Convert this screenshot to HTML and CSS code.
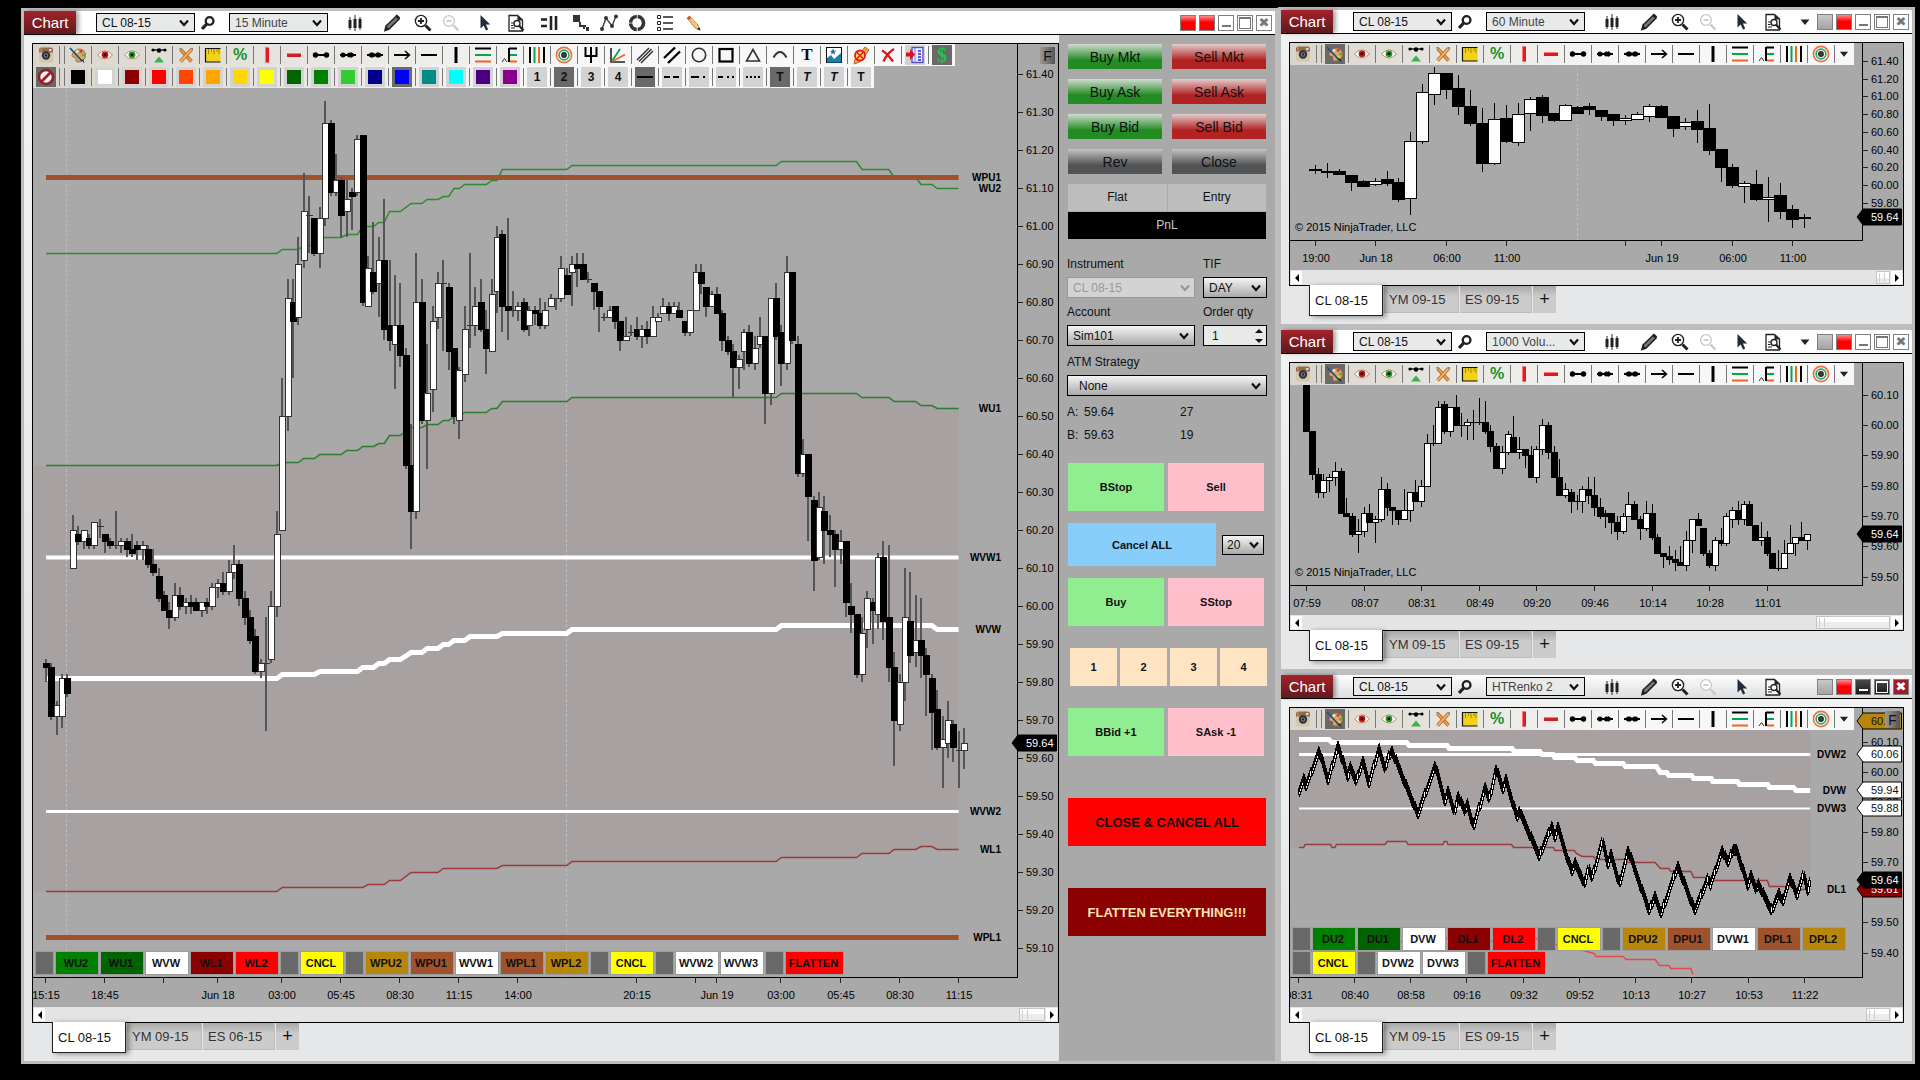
FILE: index.html
```html
<!DOCTYPE html>
<html lang="en">
<head>
<meta charset="utf-8">
<title>Chart Trader - CL 08-15</title>
<meta name="viewport" content="width=device-width, initial-scale=1">
<link rel="stylesheet" href="styles.css">
</head>
<body>
<svg class="sprite" aria-hidden="true">
  <symbol id="search" viewBox="0 0 20 20"><circle cx="12" cy="7.5" r="4.800" fill="none" stroke="#222" stroke-width="3"/><path d="M8.5 11L2.500 17.500" stroke="#222" stroke-width="4"/></symbol>
  <symbol id="candles" viewBox="0 0 20 20"><path d="M5 4v13M10 2v16M15 4v13" stroke="#222" stroke-width="1"/><path d="M5 7v8M10 6v9M15 6v9" stroke="#222" stroke-width="3"/></symbol>
  <symbol id="pen" viewBox="0 0 20 20"><path d="M4 13L14 3.4 17 6 7 16 3 17.5z" fill="#777" stroke="#222" stroke-width="1.5"/><path d="M3 17.5l1-4.5 3 3zM13 3l2-1.4 3.2 3L17 6.4z" fill="#222"/></symbol>
  <symbol id="zoomin" viewBox="0 0 20 20"><circle cx="8" cy="8" r="5.6" fill="#fff" stroke="#222" stroke-width="1.4"/><path d="M8 5v6M5 8h6" stroke="#222" stroke-width="1.8"/><path d="M12.5 12.5l5 5" stroke="#222" stroke-width="3"/></symbol>
  <symbol id="zoomout" viewBox="0 0 20 20"><circle cx="8" cy="8" r="5.4" fill="#fff" stroke="#c8c8c8" stroke-width="1.3"/><path d="M5.5 8h5" stroke="#bbb" stroke-width="1.4"/><path d="M12.5 12.5l5 5" stroke="#c8c8c8" stroke-width="2.4"/></symbol>
  <symbol id="cursor" viewBox="0 0 20 20"><path d="M5.500 2v13.500l3.200-3 2.300 5 2.200-1-2.300-5h4.300z" fill="#222b3a"/></symbol>
  <symbol id="docfind" viewBox="0 0 20 20"><path d="M3 2.500h8.500l5 4.500v11H3z" fill="#fff" stroke="#222" stroke-width="1.300"/><path d="M11.500 2.500v5h5" fill="#222"/><path d="M5 10h3M5 12.500h2.500M5 15h4" stroke="#222"/><circle cx="11" cy="10.500" r="3" fill="#fff" stroke="#222" stroke-width="1.300"/><path d="M13 12.500l4.500 5" stroke="#222" stroke-width="2.200"/></symbol>
  <symbol id="trader" viewBox="0 0 20 20"><path d="M1 6.500h6M1 13h6" stroke="#222" stroke-width="2.600"/><path d="M11 3v14M16 3v14" stroke="#222" stroke-width="2.600"/></symbol>
  <symbol id="blocks" viewBox="0 0 20 20"><path d="M2 2h7v7H2zM8 9h2v3h2v2H8zM12 12h3v2h-3zM12 14h2v2h-2zM15 14h3v4h-3z" fill="#333"/></symbol>
  <symbol id="poly" viewBox="0 0 20 20"><path d="M3 16L7 5l6 8 4-10" fill="none" stroke="#333" stroke-width="1.300"/><g fill="#333"><circle cx="3" cy="16" r="2"/><circle cx="7" cy="5" r="2"/><circle cx="13" cy="13" r="2"/><circle cx="17" cy="3.500" r="2"/></g></symbol>
  <symbol id="ring" viewBox="0 0 20 20"><circle cx="10" cy="10" r="6.500" fill="none" stroke="#333" stroke-width="3.600" stroke-dasharray="9.200 1"/></symbol>
  <symbol id="list" viewBox="0 0 20 20"><path d="M2.500 2.500h3v3h-3zM2.500 8.500h3v3h-3zM2.500 14.500h3v3h-3z" fill="none" stroke="#222"/><path d="M8 4h10M8 10h10M8 16h10" stroke="#222" stroke-width="1.600"/></symbol>
  <symbol id="pencil" viewBox="0 0 20 20"><path d="M4 5l2.500-2L15 12l2 5-5-2z" fill="#f8c374" stroke="#b8772c" stroke-width=".8"/><path d="M4 5l2.500-2 1.800 2-2.500 2z" fill="#d84a3c"/><path d="M17.500 17.500l-3.500-1.200 2.500-2z" fill="#222"/></symbol>
  <symbol id="caret" viewBox="0 0 20 20"><path d="M5.500 7.500h9L10 13z" fill="#222"/></symbol>

  <symbol id="camera" viewBox="0 0 20 20"><rect x="3" y="2.500" width="14" height="15" rx="2.500" fill="#d6c6ac"/><path d="M3 7.500V5q0-2.500 2.500-2.500h9Q17 2.500 17 5v2.500z" fill="#96694a"/><path d="M5 3v4" stroke="#c94"/><circle cx="10" cy="10.500" r="4.200" fill="#2e3236"/><circle cx="10" cy="10.500" r="2.200" fill="#6f7c88"/><circle cx="10" cy="10.500" r="1" fill="#111"/><rect x="13" y="4" width="2.500" height="2" fill="#cfe0e6"/></symbol>
  <symbol id="palette" viewBox="0 0 20 20"><path d="M5 8Q9 2 15 5q4 3 2 8-3 5-8 4-2-1-1-3 0-2-3-2-2-1 0-4z" fill="#d9a869" stroke="#8a6236" stroke-width=".8"/><circle cx="13" cy="6.500" r="1.400" fill="#d33"/><circle cx="15.500" cy="10" r="1.400" fill="#3b3"/><circle cx="13.500" cy="13.500" r="1.500" fill="#eec92c"/><circle cx="9" cy="6.500" r="1.200" fill="#eee"/><path d="M2 3l12 13" stroke="#1d4f8f" stroke-width="1.800"/><path d="M12.500 14l4 4.500-1-3.500z" fill="#222"/></symbol>
  <symbol id="eyered" viewBox="0 0 20 20"><path d="M2.500 10Q10 1.500 17.500 10 10 18 2.500 10z" fill="#fff" stroke="#b98f63" stroke-width="1"/><circle cx="10" cy="9.800" r="3.400" fill="#c3141c"/><circle cx="10" cy="9.800" r="1.500" fill="#111"/></symbol>
  <symbol id="eyegreen" viewBox="0 0 20 20"><path d="M2.500 10Q10 1.500 17.500 10 10 18 2.500 10z" fill="#fff" stroke="#b98f63" stroke-width="1"/><circle cx="10" cy="9.800" r="3.400" fill="#1f9c28"/><circle cx="10" cy="9.800" r="1.500" fill="#111"/></symbol>
  <symbol id="nodesup" viewBox="0 0 20 20"><path d="M3 5h14" stroke="#000" stroke-width="1.300"/><circle cx="4" cy="5" r="1.600"/><circle cx="10" cy="5.500" r="2.200"/><circle cx="16" cy="5" r="1.600"/><path d="M10 11.500l5 6H5z" fill="#35b54a"/></symbol>
  <symbol id="tools" viewBox="0 0 20 20"><path d="M4.500 4.500l11 12" stroke="#b0601f" stroke-width="3.400"/><path d="M4.500 4.500l11 12" stroke="#f29a3c" stroke-width="2"/><path d="M15.500 4.500l-11 12" stroke="#a9662a" stroke-width="3.400"/><path d="M15.500 4.500l-11 12" stroke="#f4b163" stroke-width="2"/><path d="M3 3l3 0-1.500 3zM14 3l3 0 0 3z" fill="#888"/></symbol>
  <symbol id="ruler" viewBox="0 0 20 20"><rect x="2.500" y="3.500" width="15" height="13.500" fill="#f2d21b"/><path d="M17.500 3.500h-15V17h15" fill="none" stroke="#111" stroke-width="1.200"/><path d="M5.500 4v5M8.500 4v3M11 4v5M14 4v3M16 4v5" stroke="#a38700" stroke-width="1"/></symbol>
  <symbol id="barv" viewBox="0 0 20 20"><rect x="8" y="2.500" width="4" height="15" fill="#e01b22"/><path d="M8.500 3v14" stroke="#f77"/></symbol>
  <symbol id="barh" viewBox="0 0 20 20"><rect x="3" y="8" width="14" height="4" fill="#cf2027"/><path d="M3 8.500h14" stroke="#f77"/></symbol>
  <symbol id="seg" viewBox="0 0 20 20"><path d="M3 10h14" stroke="#000" stroke-width="2"/><circle cx="4.500" cy="10" r="2.700"/><circle cx="15.500" cy="10" r="2.700"/></symbol>
  <symbol id="ray" viewBox="0 0 20 20"><path d="M2 10h16" stroke="#000" stroke-width="2"/><circle cx="5" cy="10" r="2.500"/><circle cx="11.500" cy="10" r="2.500"/><path d="M13 7l4.500 3-4.500 3z"/></symbol>
  <symbol id="ext" viewBox="0 0 20 20"><path d="M2 10h16" stroke="#000" stroke-width="2"/><circle cx="7.500" cy="10" r="2.500"/><circle cx="12.500" cy="10" r="2.500"/><path d="M6.500 7L2 10l4.500 3zM13.500 7l4.500 3-4.500 3z"/></symbol>
  <symbol id="arrow" viewBox="0 0 20 20"><path d="M2 10h15" stroke="#000" stroke-width="2"/><path d="M13 6l4.500 4-4.500 4" fill="none" stroke="#000" stroke-width="1.500"/></symbol>
  <symbol id="hline" viewBox="0 0 20 20"><path d="M2 10h16" stroke="#000" stroke-width="2"/></symbol>
  <symbol id="vline" viewBox="0 0 20 20"><path d="M10 2v16" stroke="#000" stroke-width="3"/></symbol>
  <symbol id="retr" viewBox="0 0 20 20"><path d="M2 3.500h16" stroke="#000" stroke-width="2"/><path d="M2 10h16" stroke="#00a651" stroke-width="2"/><path d="M2 16.500h16" stroke="#f26522" stroke-width="2"/></symbol>
  <symbol id="fibext" viewBox="0 0 20 20"><path d="M9 3v14M9 3.500h8" stroke="#000" stroke-width="2" fill="none"/><path d="M10 10h7" stroke="#00a651" stroke-width="2"/><path d="M10 16.500h7" stroke="#f26522" stroke-width="2"/><path d="M2 17l2.500-3.500L7 17" fill="none" stroke="#333" stroke-width="1"/></symbol>
  <symbol id="fibtime" viewBox="0 0 20 20"><path d="M3 2v16M17 2v16" stroke="#000" stroke-width="2"/><path d="M7.500 2v16" stroke="#00a651" stroke-width="2"/><path d="M12 2v16" stroke="#f26522" stroke-width="2"/></symbol>
  <symbol id="target" viewBox="0 0 20 20"><g fill="none" stroke-width="1.600"><circle cx="10" cy="10" r="7.600" stroke="#f0703a"/><circle cx="10" cy="10" r="4.900" stroke="#2aa866"/><circle cx="10" cy="10" r="2.100" stroke="#222"/></g><circle cx="10" cy="10" r="1"/></symbol>
  <symbol id="fork" viewBox="0 0 20 20"><path d="M4.500 2v9h11V2M10 2v16" fill="none" stroke="#000" stroke-width="2"/></symbol>
  <symbol id="fan" viewBox="0 0 20 20"><path d="M3 3v14h14" fill="none" stroke="#222" stroke-width="1.600"/><path d="M4 16L12 4" stroke="#00a651" stroke-width="1.800"/><path d="M4 16.500L17 9.500" stroke="#f26522" stroke-width="1.800"/></symbol>
  <symbol id="hatch" viewBox="0 0 20 20"><path d="M2 15L14 3M4 16.500L16.500 4M6 18L18 6" stroke="#333" stroke-width="1.500"/></symbol>
  <symbol id="para" viewBox="0 0 20 20"><path d="M2 13L13 2.500M6 18L18 6.500" stroke="#000" stroke-width="2.400"/></symbol>
  <symbol id="circle" viewBox="0 0 20 20"><circle cx="10" cy="10" r="6.700" fill="none" stroke="#333" stroke-width="1.600"/></symbol>
  <symbol id="square" viewBox="0 0 20 20"><rect x="3.500" y="4" width="13" height="12.500" fill="none" stroke="#000" stroke-width="2.200"/></symbol>
  <symbol id="tri" viewBox="0 0 20 20"><path d="M10 4.500l6.500 11.500h-13z" fill="none" stroke="#333" stroke-width="1.600"/></symbol>
  <symbol id="arc" viewBox="0 0 20 20"><path d="M3.500 12.500Q10 1.500 16.500 12.500" fill="none" stroke="#333" stroke-width="2"/></symbol>
  <symbol id="pic" viewBox="0 0 20 20"><rect x="2.500" y="2.500" width="15" height="15" fill="#fff" stroke="#111"/><path d="M3 13l4-3 3 4 7-6v9.500H3z" fill="#1a7fb0"/><path d="M9 3.500l1 2.200 2.300.1-1.800 1.400.7 2.200L9 8.200 6.900 9.400l.7-2.200-1.800-1.400 2.200-.1z" fill="#156fa0"/></symbol>
  <symbol id="nopen" viewBox="0 0 20 20"><path d="M14 2l4 3-9 12-6 2 1-5z" fill="#f0a13a" stroke="#a95a1a" stroke-width=".8"/><circle cx="9" cy="10.500" r="5" fill="#ffd84a" stroke="#e01b22" stroke-width="1.800"/><path d="M5.500 7l7 7M12.500 7l-7 7" stroke="#e01b22" stroke-width="1.500"/></symbol>
  <symbol id="del" viewBox="0 0 20 20"><path d="M4 5.500Q9 8 15 16.500M16 4Q9 8 5.500 16.500" fill="none" stroke="#d8141b" stroke-width="2.200"/></symbol>
  <symbol id="import" viewBox="0 0 20 20"><rect x="7" y="2.500" width="11" height="15" fill="#e8e8ff" stroke="#4b4bd0" stroke-width="1.300"/><path d="M13 6h3M13 9h3M13 12h3M13 15h3" stroke="#2b2bd0" stroke-width="1.400"/><path d="M10 3v14" stroke="#7d7de8"/><path d="M1 7.500h4V4l5 5.500-5 5.500v-3.500H1z" fill="#d8141b"/></symbol>
  <symbol id="nocolor" viewBox="0 0 20 20"><circle cx="10" cy="10" r="7" fill="#f4f4f4" stroke="#9b1c1f" stroke-width="2.600"/><path d="M15 5L5 15" stroke="#9b1c1f" stroke-width="2.600"/></symbol>
  <symbol id="s-solid" viewBox="0 0 20 20"><path d="M2 10h16" stroke="#000" stroke-width="2"/></symbol>
  <symbol id="s-dash" viewBox="0 0 20 20"><path d="M2 10h16" stroke="#000" stroke-width="2" stroke-dasharray="6 3"/></symbol>
  <symbol id="s-dashdot" viewBox="0 0 20 20"><path d="M2 10h16" stroke="#000" stroke-width="2" stroke-dasharray="8 4 2 4"/></symbol>
  <symbol id="s-dashdd" viewBox="0 0 20 20"><path d="M2 10h16" stroke="#000" stroke-width="2" stroke-dasharray="5 4 2 3 2 3"/></symbol>
  <symbol id="s-dot" viewBox="0 0 20 20"><path d="M3 10h15" stroke="#000" stroke-width="2" stroke-dasharray="2 2"/></symbol>
</svg>

<main class="desk">
  <section class="win win-main" aria-label="CL 08-15, 15 Minute">
    <header class="bar">
      <h1 class="tag">Chart</h1>
      <select class="pick" aria-label="Instrument"><option>CL 08-15</option></select>
      <button class="find" aria-label="Find instrument"><svg><use href="#search"/></svg></button>
      <select class="pick soft" aria-label="Interval"><option>15 Minute</option></select>
      <div class="tools" data-full="yes"></div>
      <div class="ctl"><i class="link red"></i><i class="link red"></i><button class="min" aria-label="Minimize"></button><button class="max" aria-label="Maximize"></button><button class="cls" aria-label="Close">✖</button></div>
    </header>
    <div class="body">
      <div class="charting">
        <div class="frame">
          <div class="plot" data-chart="min15">
            <svg class="canvas"></svg>
            <div class="draw"><div class="drawrow" data-row="full"></div><div class="drawrow" data-row="style"></div></div>
            <button class="fixed">F</button>
            <div class="chips" data-chips="-,WU2:green,WU1:forest,WVW:white,WL1:maroon,WL2:red,-,CNCL:yellow,-,WPU2:gold,WPU1:sienna,WVW1:white,WPL1:sienna,WPL2:gold,-,CNCL:yellow,-,WVW2:white,WVW3:white,-,FLATTEN:red"></div>
          </div>
          <div class="scroll"><button aria-label="Scroll left" class="sl"></button><div class="track"><span class="thumb"></span></div><button aria-label="Scroll right" class="sr"></button></div>
        </div>
        <nav class="tabs"><button class="on">CL 08-15</button><button>YM 09-15</button><button>ES 06-15</button><button class="add">+</button></nav>
      </div>
      <form class="panel">
        <div class="orders">
          <button type="button" class="buy">Buy Mkt</button><button type="button" class="sell">Sell Mkt</button>
          <button type="button" class="buy">Buy Ask</button><button type="button" class="sell">Sell Ask</button>
          <button type="button" class="buy">Buy Bid</button><button type="button" class="sell">Sell Bid</button>
          <button type="button" class="flat">Rev</button><button type="button" class="flat">Close</button>
        </div>
        <div class="status"><span>Flat</span><span>Entry</span><span class="pnl">PnL</span></div>
        <div class="fields">
          <div class="field"><label for="ins">Instrument</label><select id="ins" disabled><option>CL 08-15</option></select></div>
          <div class="field"><label for="tif">TIF</label><select id="tif"><option>DAY</option></select></div>
          <div class="field"><label for="acc">Account</label><select id="acc"><option>Sim101</option></select></div>
          <div class="field"><label for="qty">Order qty</label><input id="qty" type="number" value="1"></div>
        </div>
        <div class="field atm"><label for="atm">ATM Strategy</label><select id="atm"><option>None</option></select></div>
        <div class="quote"><span>A:</span><span>59.64</span><span>27</span><span>B:</span><span>59.63</span><span>19</span></div>
        <div class="pair first"><button type="button" class="lime">BStop</button><button type="button" class="pink">Sell</button></div>
        <div class="cancel"><button type="button" class="sky">Cancel ALL</button><select aria-label="Offset"><option>20</option></select></div>
        <div class="pair"><button type="button" class="lime">Buy</button><button type="button" class="pink">SStop</button></div>
        <div class="quad"><button type="button">1</button><button type="button">2</button><button type="button">3</button><button type="button">4</button></div>
        <div class="pair"><button type="button" class="lime">BBid +1</button><button type="button" class="pink">SAsk -1</button></div>
        <button type="button" class="big closeall">CLOSE &amp; CANCEL ALL</button>
        <button type="button" class="big flatten">FLATTEN EVERYTHING!!!</button>
      </form>
    </div>
  </section>

  <div class="side">
    <section class="win" aria-label="CL 08-15, 60 Minute">
      <header class="bar">
        <h2 class="tag">Chart</h2>
        <select class="pick" aria-label="Instrument"><option>CL 08-15</option></select>
        <button class="find" aria-label="Find instrument"><svg><use href="#search"/></svg></button>
        <select class="pick soft" aria-label="Interval"><option>60 Minute</option></select>
        <div class="tools"></div>
        <button class="more" aria-label="More"><svg><use href="#caret"/></svg></button>
        <div class="ctl"><i class="link"></i><i class="link red"></i><button class="min" aria-label="Minimize"></button><button class="max" aria-label="Maximize"></button><button class="cls" aria-label="Close">✖</button></div>
      </header>
      <div class="body"><div class="charting">
        <div class="frame">
          <div class="plot" data-chart="min60"><svg class="canvas"></svg><div class="draw"><div class="drawrow" data-row="short"></div></div></div>
          <div class="scroll"><button aria-label="Scroll left" class="sl"></button><div class="track"><span class="thumb t1"></span></div><button aria-label="Scroll right" class="sr"></button></div>
        </div>
        <nav class="tabs"><button class="on">CL 08-15</button><button>YM 09-15</button><button>ES 09-15</button><button class="add">+</button></nav>
      </div></div>
    </section>

    <section class="win" aria-label="CL 08-15, 1000 Volume">
      <header class="bar">
        <h2 class="tag">Chart</h2>
        <select class="pick" aria-label="Instrument"><option>CL 08-15</option></select>
        <button class="find" aria-label="Find instrument"><svg><use href="#search"/></svg></button>
        <select class="pick soft" aria-label="Interval"><option>1000 Volu...</option></select>
        <div class="tools"></div>
        <button class="more" aria-label="More"><svg><use href="#caret"/></svg></button>
        <div class="ctl"><i class="link"></i><i class="link red"></i><button class="min" aria-label="Minimize"></button><button class="max" aria-label="Maximize"></button><button class="cls" aria-label="Close">✖</button></div>
      </header>
      <div class="body"><div class="charting">
        <div class="frame">
          <div class="plot" data-chart="vol"><svg class="canvas"></svg><div class="draw"><div class="drawrow" data-row="short"></div></div></div>
          <div class="scroll"><button aria-label="Scroll left" class="sl"></button><div class="track"><span class="thumb t2"></span></div><button aria-label="Scroll right" class="sr"></button></div>
        </div>
        <nav class="tabs"><button class="on">CL 08-15</button><button>YM 09-15</button><button>ES 09-15</button><button class="add">+</button></nav>
      </div></div>
    </section>

    <section class="win active" aria-label="CL 08-15, HTRenko 2">
      <header class="bar">
        <h2 class="tag">Chart</h2>
        <select class="pick" aria-label="Instrument"><option>CL 08-15</option></select>
        <button class="find" aria-label="Find instrument"><svg><use href="#search"/></svg></button>
        <select class="pick soft" aria-label="Interval"><option>HTRenko 2</option></select>
        <div class="tools"></div>
        <div class="ctl"><i class="link"></i><i class="link red"></i><button class="min" aria-label="Minimize"></button><button class="max" aria-label="Maximize"></button><button class="cls" aria-label="Close">✖</button></div>
      </header>
      <div class="body"><div class="charting">
        <div class="frame">
          <div class="plot" data-chart="renko"><svg class="canvas"></svg><div class="draw"><div class="drawrow" data-row="short"></div></div>
            <button class="fixed">F</button>
            <div class="chips" data-chips="-,DU2:green,DU1:forest,DVW:white,DL1:maroon,DL2:red,-,CNCL:yellow,-,DPU2:gold,DPU1:sienna,DVW1:white,DPL1:sienna,DPL2:gold,-,CNCL:yellow,-,DVW2:white,DVW3:white,-,FLATTEN:red"></div>
          </div>
          <div class="scroll"><button aria-label="Scroll left" class="sl"></button><div class="track"><span class="thumb t3"></span></div><button aria-label="Scroll right" class="sr"></button></div>
        </div>
        <nav class="tabs"><button class="on">CL 08-15</button><button>YM 09-15</button><button>ES 09-15</button><button class="add">+</button></nav>
      </div></div>
    </section>
  </div>
</main>
<script src="app.js"></script>
</body>
</html>
```
FILE: styles.css
```css
* { box-sizing: border-box; }
html, body { height: 100%; }
body {
  margin: 0;
  background: #000;
  color: #111;
  font: 12px "Liberation Sans", Arial, sans-serif;
}
button, select, input { font: inherit; color: inherit; margin: 0; padding: 0; border-radius: 0; }
button { border: 0; background: none; cursor: pointer; }
h1, h2 { margin: 0; font-weight: normal; }
.sprite { position: absolute; width: 0; height: 0; }

.desk {
  display: grid;
  grid-template-columns: minmax(0, 1257fr) minmax(0, 637fr);
  height: 100vh;
  min-height: 960px;
  padding: 7px 5px 16px 21px;
}
.side { display: grid; grid-template-rows: minmax(0, 320fr) minmax(0, 345fr) minmax(0, 392fr); }

/* windows */
.win {
  display: flex;
  flex-direction: column;
  border: 3px solid #bdbdbd;
  background: linear-gradient(#f2f4f4, #e6e7e9 60%);
  min-width: 0;
  min-height: 0;
}
.win-main { margin-top: 1px; }
.bar {
  display: flex;
  align-items: center;
  height: 24px;
  flex: none;
  background: #fff;
  border-bottom: 1px solid #000;
}
.active .bar { background: linear-gradient(#fdfdfd, #dcdee0); }
.tag {
  width: 52px;
  height: 23px;
  margin-right: 20px;
  flex: none;
  background: linear-gradient(#a52229, #5e1a1e);
  box-shadow: 3px 0 4px rgba(0, 0, 0, .35);
  color: #fff;
  font-size: 15px;
  line-height: 23px;
  text-align: center;
}
select, .field input {
  appearance: none;
  border: 1px solid #000;
  background: url("data:image/svg+xml,%3Csvg xmlns='http://www.w3.org/2000/svg' width='10' height='8'%3E%3Cpath d='M1 1.500l4 4.500 4-4.500' fill='none' stroke='%23111' stroke-width='2.200'/%3E%3C/svg%3E") no-repeat right 5px center, linear-gradient(#f4f4f4, #a9a9a9);
  padding: 0 5px;
}
.pick { width: 99px; height: 19px; flex: none; background-color: #e8eaea; background-image: url("data:image/svg+xml,%3Csvg xmlns='http://www.w3.org/2000/svg' width='10' height='8'%3E%3Cpath d='M1 1.500l4 4.500 4-4.500' fill='none' stroke='%23111' stroke-width='2.200'/%3E%3C/svg%3E"); }
.pick.soft { color: #444; }
.find { width: 16px; height: 16px; margin: 0 13px 0 5px; flex: none; }
.find svg, .tools svg, .more svg { display: block; width: 100%; height: 100%; }
.tools { display: flex; gap: 8px; margin-left: 17px; flex: 1; min-width: 0; overflow: hidden; }
.tools button { width: 20px; height: 20px; flex: none; }
.tools .sp3 { margin-left: 3px; }
.tools .sp6 { margin-left: 6px; }
.tools .sp9 { margin-left: 9px; }
.more { width: 20px; height: 20px; margin-right: 2px; flex: none; }
.ctl { display: flex; gap: 3px; padding-right: 3px; flex: none; }
.ctl > * { width: 16px; height: 16px; border: 1px solid #808080; background: #fff; }
.ctl .link { background: linear-gradient(#c9c7c8, #a5a3a4); }
.ctl .red { background: linear-gradient(#ff8c8c, #f00 45%); }
.ctl button { display: flex; align-items: center; justify-content: center; }
.ctl .min { align-items: flex-end; }
.ctl .min::before { content: ""; width: 9px; height: 2px; margin-bottom: 3px; background: #777; }
.ctl .max::before { content: ""; width: 10px; height: 9px; border: 1px solid #777; border-top-width: 2px; }
.ctl .cls { color: #777; font: 13px "DejaVu Sans", sans-serif; line-height: 14px; }
.active .ctl button { background: linear-gradient(#4a4a4e, #1a1a1d); }
.active .ctl .min::before { background: #fff; }
.active .ctl .max::before { border-color: #fff; }
.active .ctl .cls { color: #fff; background: #a01c26; }

.body { display: flex; flex: 1; min-height: 0; }
.charting { display: flex; flex-direction: column; flex: 1; min-width: 0; padding: 8px 8px 0; }
.win-main .charting { padding-right: 0; }
.frame { display: flex; flex-direction: column; flex: 1; min-height: 0; border: 1px solid #000; }
.plot {
  display: grid;
  grid-template: minmax(0, 1fr) / minmax(0, 1fr);
  flex: 1;
  min-height: 0;
  background: #a9a9a9;
  overflow: hidden;
}
.plot > * { grid-area: 1 / 1; }
.canvas { width: 100%; height: 100%; font-size: 11px; }
.canvas .tagline { font-size: 10px; font-weight: bold; text-anchor: end; }

/* drawing toolbars */
.draw { align-self: start; justify-self: start; max-width: 100%; overflow: hidden; }
.drawrow {
  display: flex;
  align-items: center;
  width: max-content;
  height: 22px;
  padding-left: 3px;
  background: linear-gradient(90deg, #d9d5cc, #f7f7f7 60%);
}
.drawrow button {
  display: flex;
  align-items: center;
  justify-content: center;
  width: 20px;
  height: 20px;
  flex: none;
  margin: 0 3px;
  font-weight: bold;
  font-size: 12px;
}
.drawrow button:first-child { margin: 0 3px 0 0; }
.drawrow svg { width: 20px; height: 20px; }
.drawrow .sep { width: 1px; height: 18px; background: #777; flex: none; }
.drawrow .grip { width: 6px; height: 18px; border: solid #777; border-width: 0 1px; flex: none; }
.drawrow .box { background: #d3d3d3; }
.drawrow button.sel { background: #696969; }
.drawrow .sw { width: 14px; height: 14px; }
.drawrow .pct { color: #17902b; font: bold 16px "Liberation Sans", sans-serif; }
.drawrow .dollar { color: #22c440; font: bold 20px "Liberation Serif", serif; }
.drawrow .serif { font: bold 17px "Liberation Serif", serif; }
.drawrow .ital { font-style: italic; }
.drawrow .drop { width: 18px; margin: 0 1px 0 0; }

.fixed {
  align-self: start;
  justify-self: end;
  width: 15px;
  height: 17px;
  margin: 3px 3px 0 0;
  background: linear-gradient(90deg, #999, #555);
  font-size: 14px;
}
.chips {
  display: flex;
  flex-wrap: wrap;
  gap: 2px 3px;
  align-self: end;
  margin: 0 40px 33px 0;
  padding: 0 3px;
}
.chips button, .chips i { height: 22px; outline: 1px solid #9c9c9c; }
.chips i { width: 17px; background: #696969; }
.chips button { width: 42px; padding-right: 2px; font-size: 11px; font-weight: bold; }
.chips .wide { width: 57px; }
.green { background: #008000; }
.forest { background: #006400; }
.white { background: #fff; }
.maroon { background: #8b0000; }
.red { background: #f00; }
.yellow { background: #ff0; }
.gold { background: #b8860b; }
.sienna { background: #a0522d; }

.scroll { display: flex; height: 15px; flex: none; background: #e4e4e4; padding: 1px; }
.scroll button { width: 11px; background: #fff; display: flex; align-items: center; justify-content: center; }
.scroll button::before { content: ""; border: 4px solid transparent; }
.scroll .sl::before { border-right-color: #000; margin-left: -4px; }
.scroll .sr::before { border-left-color: #000; margin-right: -4px; }
.track { display: flex; justify-content: flex-end; flex: 1; }
.thumb { width: 26px; margin-right: 1px; border: 1px solid #c4c4c4; background: linear-gradient(#fff 50%, #ececec 50%); }
.thumb::before { content: ""; display: block; width: 4px; height: 9px; margin: 1px 2px; border: solid #ccc; border-width: 0 1px; }
.thumb.t1 { width: 14px; }
.thumb.t2 { width: 74px; }
.thumb.t3 { width: 24px; }

.tabs { display: flex; gap: 1px; height: 38px; flex: none; padding-left: 20px; align-items: flex-start; }
.tabs button {
  width: 75px;
  height: 27px;
  padding-left: 5px;
  background: linear-gradient(#a9a9a9, #cbcbcb 40%);
  border: solid #bbb;
  border-width: 0 1px 1px 0;
  color: #333;
  font-size: 13px;
  text-align: left;
}
.tabs button:nth-child(3) { width: 72px; }
.tabs .on {
  width: 74px;
  height: 31px;
  margin-top: -1px;
  background: #fff;
  border: solid #222;
  border-width: 0 1px 1px;
  box-shadow: 3px 1px 5px rgba(0, 0, 0, .4);
  color: #111;
  z-index: 1;
}
.tabs .add { width: 23px; padding: 0; font-size: 18px; color: #111; border: 0; text-align: center; }

/* order panel */
.panel { width: 216px; flex: none; padding: 9px 8px; background: #a9a9a9; }
.orders { display: grid; grid-template-columns: 1fr 1fr; gap: 10px; padding: 0 1px; }
.orders button { height: 25px; font-size: 14px; color: #111; }
.orders .buy { background: linear-gradient(#d0dcd0, #228b22 65%); }
.orders .sell { background: linear-gradient(#e2cccc, #b22222 65%); }
.orders .flat { background: linear-gradient(#c4c4c4, #515355 65%); }
.status { display: grid; grid-template-columns: 1fr 1fr; gap: 1px; margin: 10px 1px 0; text-align: center; line-height: 27px; }
.status span { background: #bebebe; }
.status .pnl { grid-column: 1 / 3; background: #000; color: #ccc; }
.fields { display: grid; grid-template-columns: 1fr 64px; gap: 7px 8px; margin-top: 18px; }
.field { display: flex; flex-direction: column; gap: 6px; line-height: 14px; }
.field select, .field input { width: 100%; height: 21px; opacity: 1; }
.field select:disabled { color: #999; border-color: #999; background: url("data:image/svg+xml,%3Csvg xmlns='http://www.w3.org/2000/svg' width='10' height='8'%3E%3Cpath d='M1 1.500l4 4.500 4-4.500' fill='none' stroke='%23999' stroke-width='2.200'/%3E%3C/svg%3E") no-repeat right 4px center #d3d3d3; }
.field input {
  appearance: textfield;
  padding-left: 8px;
  background: url("data:image/svg+xml,%3Csvg xmlns='http://www.w3.org/2000/svg' width='8' height='14'%3E%3Cpath d='M0 4l4-4 4 4zM0 10l4 4 4-4z' fill='%23111'/%3E%3C/svg%3E") no-repeat right 3px center #e8eaea;
}
.field input::-webkit-inner-spin-button { appearance: none; }
.atm { margin-top: 9px; }
.atm select { padding-left: 11px; }
.quote { display: grid; grid-template-columns: 17px 96px 1fr; row-gap: 9px; margin-top: 9px; line-height: 14px; }
.pair, .cancel { display: flex; gap: 4px; margin-top: 12px; padding: 0 3px 0 1px; }
.pair.first { margin-top: 21px; }
.pair button { flex: 1; height: 48px; }
.panel .lime, .panel .pink, .panel .sky, .quad button { font-weight: bold; font-size: 11px; }
.lime { background: #90ee90; }
.pink { background: #ffc0cb; }
.cancel { gap: 6px; align-items: center; }
.sky { flex: 1; height: 43px; background: #87cefa; }
.cancel select { width: 42px; height: 20px; padding: 0 4px; background-position: right 4px center, 0 0; }
.quad { display: grid; grid-template-columns: repeat(4, 1fr); gap: 3px; margin-top: 22px; padding-left: 3px; }
.quad button { height: 38px; background: #ffe4c4; }
.quad + .pair { margin-top: 22px; }
.big { display: block; width: 198px; height: 48px; margin: 42px 1px 0; font-weight: bold; font-size: 13px; }
.closeall { background: #f00; }
.flatten { background: #8b0000; color: #ffe4b5; }
```
FILE: app.js
```js
// Toolbars ---------------------------------------------------------------
const icon = id => `<svg><use href="#${id}"/></svg>`;
const titleTools = ['candles', 'pen sp9', 'zoomin sp3', 'zoomout', 'cursor sp6', 'docfind sp3'];
const extraTools = ['trader sp6', 'blocks sp3', 'poly', 'ring', 'list', 'pencil'];
document.querySelectorAll('.tools').forEach(el => {
  const set = el.dataset.full ? titleTools.concat(extraTools) : titleTools;
  el.innerHTML = set.map(s => {
    const [id, sp = ''] = s.split(' ');
    return `<button class="${sp}" aria-label="${id}">${icon(id)}</button>`;
  }).join('');
});

const basic = ['palette', 'eyered', 'eyegreen', 'nodesup', 'tools', 'ruler', '%', 'barv', 'barh', 'seg', 'ray', 'ext',
  'arrow', 'hline', 'vline', 'retr', 'fibext', 'fibtime', 'target'];
const more = ['fork', 'fan', 'hatch', 'para', 'circle', 'square', 'tri', 'arc', 'T', 'pic', 'nopen', 'del', 'import', '$'];
const colors = ['#000', '#fff', '#8b0000', '#f00', '#ff4500', '#ffa500', '#ffd700', '#ff0', '#006400', '#008000', '#32cd32',
  '#00008b', '#00f', '#008b8b', '#0ff', '#4b0082', '#8b008b'];
const styles = ['s-solid', 's-dash', 's-dashdot', 's-dashdd', 's-dot'];
const tool = (id, cls = '') => {
  if (id === '%') return '<button class="pct">%</button>';
  if (id === '$') return '<button class="dollar sel">$</button>';
  if (id === 'T') return '<button class="serif">T</button>';
  return `<button class="${cls}" aria-label="${id}">${icon(id)}</button>`;
};
const sep = '<span class="sep"></span>';
const start = (id, cls) => tool(id, cls) + '<span class="grip"></span>';
const rows = {
  full: () => start('camera') + basic.concat(more).map(id => tool(id, id === 'import' ? 'box' : '')).join(sep),
  short: () => start('camera') + basic.map(id => tool(id, id === 'palette' ? 'sel' : '')).join(sep) + sep +
    `<button class="drop" aria-label="More tools">${icon('caret')}</button>`,
  style: () => start('nocolor', 'sel') + [
    ...colors.map(c => `<button class="box${c === '#00f' ? ' sel' : ''}" aria-label="Color ${c}"><span class="sw" style="background:${c}"></span></button>`),
    ...[1, 2, 3, 4].map(n => `<button class="box${n === 2 ? ' sel' : ''}">${n}</button>`),
    ...styles.map((s, i) => tool(s, i ? 'box' : 'sel')),
    '<button class="box sel">T</button>', '<button class="box ital">T</button>', '<button class="box ital">T</button>', '<button class="box">T</button>'
  ].join(sep)
};
document.querySelectorAll('.drawrow').forEach(el => { el.innerHTML = rows[el.dataset.row](); });
document.querySelectorAll('.chips').forEach(el => {
  el.innerHTML = el.dataset.chips.split(',').map(c => {
    if (c === '-') return '<i></i>';
    const [name, color] = c.split(':');
    return `<button class="${color}${name.length > 5 ? ' wide' : ''}">${name}</button>`;
  }).join('');
});

// Market data: open high low close, in cents above 59.00 ------------------
const min15 = `85 86 80 84,84 85 70 71,71 75 66 74,71 82 68 81,81 82 76 77,110 124 110 120,119 121 116 117,117 120 115 120,118 119 115 116,
116 122 115 122,121 123 118 121,119 119 114 117,117 118 115 116,116 125 115 116,116 118 114 117,117 118 113 115,115 119 113 114,116 117 112 115,
115 117 112 116,115 116 110 111,111 115 108 109,108 110 101 102,103 104 99 99,99 101 94 97,97 106 96 103,103 105 99 100,100 102 98 101,
101 103 98 100,101 102 99 99,99 101 97 101,101 102 98 100,100 106 99 105,105 107 102 106,106 109 103 104,104 112 103 109,109 116 107 111,
111 112 100 102,102 104 95 97,97 99 90 91,92 94 82 83,83 86 81 85,85 97 67 85,86 104 85 100,100 125 97 119,120 160 120 150,150 186 146 181,
180 186 160 175,176 197 174 190,191 214 189 204,203 208 193 203,202 202 192 193,193 205 189 202,202 233 200 227,227 228 208 209,209 219 208 212,
212 213 197 203,204 212 197 207,209 210 199 208,209 224 208 223,224 224 179 180,179 192 179 189,188 201 182 183,185 197 176 191,191 207 170 173,
174 191 167 170,169 187 157 174,174 185 163 166,166 168 136 137,137 148 115 125,125 193 123 180,180 186 148 149,149 169 136 156,157 179 151 175,
176 188 173 185,185 191 167 185,184 185 162 167,168 168 148 150,149 163 144 162,161 179 159 173,174 193 168 174,174 184 171 179,180 186 172 173,
173 178 161 168,167 186 167 182,183 200 177 197,198 199 172 179,179 202 170 178,178 183 176 178,178 180 175 179,180 181 172 173,174 179 171 178,
178 179 174 177,177 181 173 174,174 180 173 178,179 182 179 181,181 181 178 181,181 192 180 189,187 189 182 182,188 192 179 190,190 193 184 189,
190 193 186 186,186 188 185 186,185 185 178 183,183 183 172 179,176 177 175 176,176 179 176 178,179 179 173 175,175 175 167 170,170 176 170 171,
172 174 171 172,173 176 170 171,171 174 168 173,173 175 169 171,171 179 171 176,175 177 175 176,177 181 177 179,179 180 175 177,177 180 177 179,
178 180 176 176,175 175 171 172,172 178 171 178,178 190 178 188,188 190 182 185,184 184 176 179,179 183 179 182,182 184 177 177,177 178 167 170,
170 171 166 167,167 169 155 163,163 166 157 165,167 173 162 172,172 174 163 164,164 171 162 168,169 176 168 171,171 171 148 156,156 181 153 181,
181 185 170 171,172 174 158 164,164 192 162 188,188 188 169 170,169 171 134 135,135 144 134 140,140 140 117 129,128 129 104 112,113 130 112 126,
125 129 111 120,120 124 113 119,119 120 105 115,115 120 111 117,117 117 97 101,100 106 93 98,98 98 81 82,82 97 80 93,94 104 89 102,101 102 90 99,
98 114 94 113,113 117 91 96,97 116 80 84,84 88 58 70,69 82 67 80,80 110 75 97,96 109 85 87,88 103 84 91,91 102 81 87,87 89 71 82,81 82 62 72,
73 78 62 63,63 71 52 65,64 75 60 70,69 70 59 63,62 67 52 62,62 68 57 64`;

const min60 = `118 123 112 117,116 125 108 115,116 118 111 112,111 111 93 104,105 106 99 99,101 108 99 105,107 116 99 102,104 108 81 84,
85 160 66 150,150 214 146 205,203 233 190 227,227 227 197 208,209 224 179 189,189 207 167 170,170 187 115 125,125 193 123 175,176 190 148 150,
149 193 144 180,181 199 161 197,199 202 170 179,181 181 171 174,174 191 172 190,188 189 181 181,189 193 179 186,185 185 172 178,180 180 167 173,
173 179 168 176,175 182 175 180,178 191 171 189,189 190 176 177,178 178 154 164,167 176 162 171,172 185 147 163,164 191 134 140,141 141 103 120,
120 124 97 100,99 105 80 102,101 117 82 84,84 109 58 87,89 102 62 71,73 78 52 62,64 67 52 63`;

const vol = `125 130 98 98,98 98 82 84,84 86 76 78,78 84 76 82,82 84 78 83,83 88 80 85,85 86 71 71,71 76 70 70,70 71 63 64,64 69 58 65,65 73 63 71,
71 74 68 68,68 70 61 69,69 83 68 79,79 81 70 73,73 73 67 72,72 72 67 69,69 79 69 72,72 78 68 78,78 82 75 75,75 82 73 80,80 97 80 94,94 100 93 94,
94 108 94 106,107 108 97 98,98 106 96 106,106 110 100 100,100 104 96 100,100 102 95 101,101 105 95 101,101 109 100 101,101 108 97 98,98 100 91 93,
93 94 86 86,86 93 84 91,91 98 90 97,96 103 91 91,91 96 89 92,92 92 86 90,90 93 83 83,83 93 81 92,92 102 90 100,100 101 89 91,91 93 83 83,83 89 77 77,
77 81 76 79,78 79 71 75,75 77 72 75,75 80 71 79,79 83 74 77,77 83 70 73,73 76 69 70,71 72 66 70,71 71 64 68,68 70 62 65,65 71 64 70,70 78 70 74,
74 75 69 69,69 70 62 66,66 75 65 71,71 74 62 63,63 64 58 58,58 58 53 57,57 60 54 56,56 59 52 55,55 60 54 54,54 65 52 62,62 69 58 69,69 71 67 67,
66 66 57 58,58 59 53 54,54 63 52 62,62 66 60 61,61 71 60 70,69 73 66 72,72 75 67 69,69 75 67 74,74 75 67 67,67 67 62 62,62 68 60 63,63 65 57 58,
58 58 53 53,53 59 52 53,53 62 53 58,58 67 58 61,61 63 57 63,63 68 62 62,62 64 59 64`;

const parse = s => s.split(',').map(b => b.trim().split(' ').map(Number));

// Indicator lines as "bar value" pairs
const pts = parse;
const wu2 = pts('0 193,43 193,44 194,47 194,48 195,50 195,51 197,55 197,56 198,58 198,59 200,61 200,62 201,63 201,64 204,66 204,68 206,70 206,71 207,73 207,74 208,75 208,76 210,77 210,78 211,82 211,83 212,84 212,85 215,97 215,98 216,136 216,137 217,151 217,152 215,157 215,158 213,162 213,163 211,165 211,166 210,170 210');
const wu1 = pts('0 137,43 137,44 138,47 138,48 139,50 139,51 140,55 140,56 141,58 141,59 142,61 142,62 143,63 143,64 145,66 145,68 147,70 147,71 148,73 148,74 149,75 149,76 150,77 150,78 151,82 151,83 152,84 152,85 154,97 154,98 155,136 155,137 156,151 156,152 155,157 155,158 154,162 154,163 153,165 153,166 152,170 152');
const wvw = pts('0 81,43 81,44 82,50 82,51 83,58 83,59 84,61 84,62 85,63 85,64 86,66 86,68 88,70 88,71 89,73 89,74 90,75 90,76 91,78 91,79 92,84 92,85 93,97 93,98 94,136 94,137 95,165 95,166 94,170 94');
const wl1 = pts('0 25,43 25,44 26,59 26,60 27,63 27,64 28,66 28,68 30,73 30,74 31,84 31,85 32,97 32,98 33,136 33,137 34,151 34,152 35,157 35,158 36,162 36,163 37,165 37,166 36,170 36');
const dvw = pts('0 111,72 111,79 110,259 110,265 109,356 109,361 108,512 108,517 107,579 107,585 106,611 106,615 105,662 105,669 104,707 104,713 103,779 103,785 102,859 102,869 100,884 100,889 99,944 99,949 98,991 98,995 97,1054 97,1059 96,1127 96,1131 95,1189 95,1195 94,1229 94');
const dl1 = pts('0 75,11 75,15 76,76 76,79 75,86 75,90 76,207 76,212 77,258 77,262 76,346 76,349 77,355 77,358 76,511 76,516 75,612 75,615 74,662 74,667 73,681 72,707 72,714 71,785 71,791 70,856 70,869 68,889 68,894 67,942 67,949 65,989 65,995 64,1126 64,1131 62,1189 62,1197 61,1229 61');
const dl2 = pts('0 41,29 41,79 42,207 42,212 44,344 44,352 45,459 45,462 44,511 44,569 45,619 43,683 41,709 40,714 39,779 39,787 38,856 38,867 36,889 36,894 35,942 35,947 33');
const swings = pts('0 93,13 98,18 95,50 107,71 97,95 109,119 98,124 102,139 97,155 104,170 96,193 108,209 101,213 104,225 107,287 86,329 102,353 90,360 94,375 87,384 92,401 87,405 90,421 82,449 95,459 91,476 101,491 94,498 98,525 85,531 87,579 72,587 75,609 82,616 78,623 82,657 67,664 70,688 63,697 68,706 65,731 77,744 69,751 73,772 63,793 74,843 54,857 59,872 53,912 69,953 54,985 65,989 62,1019 74,1032 70,1044 74,1054 74,1081 62,1088 66,1101 61,1105 63,1137 54,1156 60,1164 57,1182 65,1199 59,1214 66,1226 60,1231 64');

// Fixed-size bricks that follow the swings
function bricks() {
  const out = [];
  for (let s = 1; s < swings.length; s++) {
    const [x0, p0] = swings[s - 1], [x1, p1] = swings[s];
    const n = Math.max(1, Math.round((x1 - x0) / 2.7)), up = p1 > p0;
    for (let k = 0; k < n; k++) {
      const p = p0 + (p1 - p0) * (k + .5) / n;
      out.push({ at: x0 + (x1 - x0) * (k + .5) / n, b: up ? [p - 1, p + 2, p - 2, p + 1] : [p + 1, p + 2, p - 2, p - 1] });
    }
  }
  return out;
}

const charts = {
  min15: {
    bars: parse(min15).map((b, i) => ({ at: i, b })), last: 171, pad: [13, 54], range: [247.9, 2.4], body: 6, wick: 2, wickColor: '#555', edge: '#333',
    grid: 10, prices: [240, 10], sessions: [4, 97],
    times: '0 15:15,11 18:45,22 ,32 Jun 18,44 03:00,55 05:45,66 08:30,77 11:15,88 14:00,110 20:15,121 ,125 Jun 19,137 03:00,148 05:45,159 08:30,170 11:15',
    zone: [wu1, wl1],
    lines: [[wu2, '#2e8b2e', 1.5], [wu1, '#2e7d2e', 1.5], [wl1, '#9c3a3c', 1.5],
      [[[0, 213], [170, 213]], '#a0522d', 5], [[[0, 13], [170, 13]], '#a0522d', 5],
      [[[0, 113], [170, 113]], '#fff', 4], [[[0, 46], [170, 46]], '#fff', 3], [wvw, '#fff', 5]],
    names: [['WPU1', 213], ['WU2', 210], ['WU1', 152], ['WVW1', 113], ['WVW', 94], ['WVW2', 46], ['WL1', 36], ['WPL1', 13]],
    marks: [[64, '#000', '#fff']]
  },
  min60: {
    bars: parse(min60).map((b, i) => ({ at: i, b })), last: 41, pad: [26, 58], range: [260.3, 38.1], body: 12, wick: 1,
    prices: [240, 80], grid: 20, sessions: [22], credit: true,
    times: '0 19:00,5 Jun 18,11 06:00,16 11:00,26 ,29 Jun 19,35 06:00,40 11:00', marks: [[64, '#000', '#fff']]
  },
  vol: {
    bars: parse(vol).map((b, i) => ({ at: i, b })), last: 87, pad: [17, 55], range: [120.5, 47.3], body: 6, wick: 1,
    prices: [110, 50], grid: 10, sessions: [], credit: true,
    times: '0 07:59,10 08:07,20 08:31,30 08:49,40 09:20,50 09:46,60 10:14,70 10:28,80 11:01', marks: [[64, '#000', '#fff']]
  },
  renko: {
    bars: bricks(), last: 1231, pad: [9, 52], range: [121.2, 31.9], body: 2, wick: 1,
    prices: [110, 40], grid: 10, sessions: [],
    times: '0 08:31,135 08:40,270 08:58,405 09:16,540 09:32,675 09:52,810 10:13,946 10:27,1081 10:53,1216 11:22',
    zone: [[[0, 125], [1229, 125]], dl1],
    lines: [[dl1, '#9c3a3c', 1.5], [dl2, '#e8474a', 1.5], [[[0, 106], [1229, 106]], '#fff', 3], [[[0, 88], [1229, 88]], '#fff', 2], [dvw, '#fff', 5]],
    names: [['DVW2', 106], ['DVW', 94], ['DVW3', 88], ['DL1', 61]],
    marks: [[117, '#b8860b', '#111'], [106, '#fff', '#111'], [94, '#fff', '#111'], [88, '#fff', '#111'], [61, '#8b0000', '#fff'], [64, '#000', '#fff']]
  }
};

function draw(plot) {
  const c = charts[plot.dataset.chart], svg = plot.querySelector('.canvas');
  const W = plot.clientWidth, H = plot.clientHeight, pw = W - 40, ph = H - 30;
  const X = i => c.pad[0] + i * (pw - c.pad[0] - c.pad[1]) / c.last;
  const Y = p => (c.range[0] - p) / (c.range[0] - c.range[1]) * ph;
  const path = l => l.map(([i, p]) => `${X(i).toFixed(1)} ${(Math.round(Y(p)) + .5)}`).join('L');
  const crisp = 'shape-rendering="crispEdges"';
  let s = '';
  if (c.zone) {
    const [t, b] = c.zone, low = b.slice().reverse();
    s += `<path fill="#a7a1a1" d="M0 ${Y(t[0][1])}L${path(t)}L${path(low)}L0 ${Y(b[0][1])}Z"/>`;
  }
  c.sessions.forEach(i => { s += `<path ${crisp} d="M${Math.round(X(i)) - .5} 0V${ph}" stroke="#bdbdbd" stroke-dasharray="3 2"/>`; });
  (c.lines || []).forEach(([l, col, w]) => { s += `<path fill="none" stroke="${col}" stroke-width="${w}" d="M${path(l)}"/>`; });
  if (c.credit) s += `<text x="5" y="${ph - 9}">© 2015 NinjaTrader, LLC</text>`;
  const edge = c.edge || '#000', wc = c.wickColor || '#000';
  c.bars.forEach(({ at, b: [o, h, l, cl] }) => {
    const x = Math.round(X(at)) - (c.wick === 1 ? 1 : 0), top = Math.round(Y(Math.max(o, cl))), bot = Math.round(Y(Math.min(o, cl)));
    const xc = c.wick === 1 ? x + .5 : x;
    s += `<path ${crisp} d="M${xc} ${Math.round(Y(h))}V${Math.round(Y(l))}" stroke="${wc}" stroke-width="${c.wick}"/>`;
    const bx = x - Math.floor(c.body / 2) + .5;
    if (top === bot) s += `<path ${crisp} d="M${bx - .5} ${top + .5}h${c.body + 1}" stroke="${edge}"/>`;
    else s += `<rect ${crisp} x="${bx}" y="${top + .5}" width="${c.body}" height="${bot - top}" fill="${cl > o ? '#fff' : '#000'}" stroke="${cl > o ? edge : '#000'}"/>`;
  });
  (c.names || []).forEach(([n, p]) => { s += `<text class="tagline" x="${pw - 17}" y="${Math.round(Y(p)) + 4}">${n}</text>`; });
  s += `<path fill="#a9a9a9" d="M${pw} 0H${W}V${H}H0V${ph}H${pw}z"/>`;
  s += `<path ${crisp} d="M${pw - .5} 0V${ph + .5}M0 ${ph + .5}H${pw}" stroke="#000"/>`;
  for (let p = c.prices[0]; p >= c.prices[1]; p -= c.grid) {
    const y = Math.round(Y(p));
    s += `<path ${crisp} d="M${pw} ${y + .5}h5" stroke="#222"/><text x="${pw + 8}" y="${y + 4}">${(59 + p / 100).toFixed(2)}</text>`;
  }
  c.times.split(',').forEach(t => {
    const k = t.indexOf(' '), x = Math.round(X(+t.slice(0, k)));
    s += `<path ${crisp} d="M${x - .5} ${ph}v6" stroke="#222"/><text text-anchor="middle" x="${x}" y="${ph + 22}">${t.slice(k + 1)}</text>`;
  });
  c.marks.forEach(([p, bg, fg]) => {
    const y = Math.round(Y(p));
    s += `<path d="M${pw - 6} ${y}l6-8h38.500v16h-38.500z" fill="${bg}" stroke="#000"/><text fill="${fg}" x="${pw + 8}" y="${y + 4}">${(59 + p / 100).toFixed(2)}</text>`;
  });
  svg.innerHTML = s;
}
const plots = document.querySelectorAll('.plot');
const drawAll = () => plots.forEach(draw);
drawAll();
window.addEventListener('resize', drawAll);
```
